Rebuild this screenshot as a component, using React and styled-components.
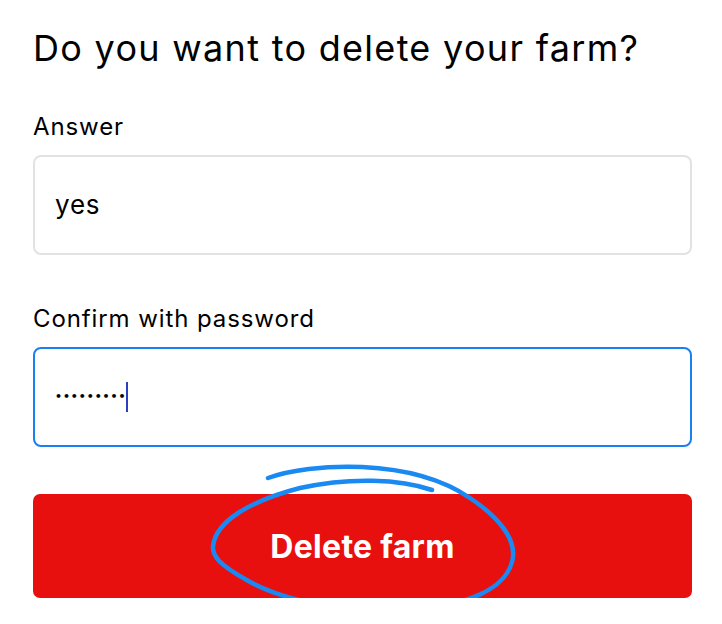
import React from "react";
import styled, { createGlobalStyle } from "styled-components";

const Global = createGlobalStyle`
  html, body { margin: 0; padding: 0; background: #ffffff; }
  body { font-family: Inter, "Noto Sans", sans-serif; color: #000; }
`;

const Page = styled.div`
  width: 722px;
  box-sizing: border-box;
  padding: 26px 30px 0 33px;
  display: flex;
  flex-direction: column;
`;

const Title = styled.h1`
  margin: 0;
  font-size: 36px;
  font-weight: 400;
  line-height: 44px;
  letter-spacing: 1.3px;
`;

const Field = styled.div`
  display: flex;
  flex-direction: column;
  gap: 14px;
  margin-top: ${(p) => p.$top}px;
`;

const Label = styled.label`
  font-size: 24px;
  font-weight: 400;
  line-height: 28px;
  letter-spacing: 0.9px;
`;

const Box = styled.div`
  box-sizing: border-box;
  height: 100px;
  border: 2px solid ${(p) => (p.$focused ? "#1a7ff2" : "#e2e2e2")};
  border-radius: 8px;
  display: flex;
  align-items: center;
  padding: 0 20px;
`;

const Value = styled.span`
  font-size: 26px;
  line-height: 30px;
  letter-spacing: 0.8px;
`;

const Dots = styled.span`
  font-family: "DejaVu Sans", sans-serif;
  font-size: 11px;
  letter-spacing: 0.9px;
  line-height: 30px;
  font-weight: 700;
`;

const Caret = styled.span`
  display: inline-block;
  width: 2px;
  height: 30px;
  background: #2c3fbf;
`;

const ButtonWrap = styled.div`
  position: relative;
  margin-top: 47px;
`;

const DeleteButton = styled.button`
  width: 100%;
  height: 104px;
  border: 0;
  border-radius: 7px;
  background: #e80f0f;
  color: #fff;
  font-family: Inter, "Noto Sans", sans-serif;
  font-size: 32px;
  font-weight: 700;
  letter-spacing: 0.3px;
  cursor: pointer;
`;

const Scribble = styled.svg`
  position: absolute;
  left: 167px;
  top: -38px;
  width: 325px;
  height: 162px;
  pointer-events: none;
  overflow: visible;
`;

export default function App() {
  return (
    <>
      <Global />
      <Page>
        <Title>Do you want to delete your farm?</Title>
        <Field $top={43}>
          <Label>Answer</Label>
          <Box>
            <Value>yes</Value>
          </Box>
        </Field>
        <Field $top={50}>
          <Label>Confirm with password</Label>
          <Box $focused>
            <Dots>•••••••••</Dots>
            <Caret />
          </Box>
        </Field>
        <ButtonWrap>
          <DeleteButton>Delete farm</DeleteButton>
          <Scribble viewBox="0 0 325 162">
            <path
              d="M68,22 C110,7 210,1 270,42 C300,62 318,85 312,106 C305,132 270,151 200,154 C140,156 80,144 45,123 C20,109 12,100 13,90 C16,65 50,45 100,32 C150,21 200,23 232,34"
              fill="none"
              stroke="#1a8af2"
              strokeWidth="4.5"
              strokeLinecap="round"
              strokeLinejoin="round"
            />
          </Scribble>
        </ButtonWrap>
      </Page>
    </>
  );
}
